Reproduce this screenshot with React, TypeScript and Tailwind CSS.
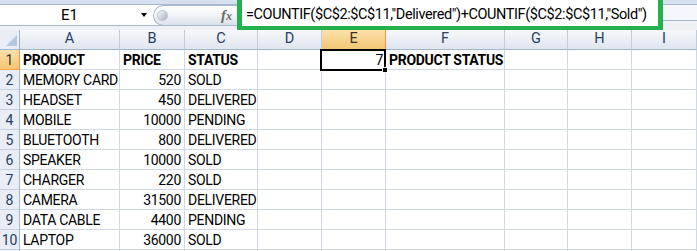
const GRID = "grid grid-cols-[20px_100px_65px_73px_64px_64px_119px_63px_64px_1fr]";

const COLS = ["A", "B", "C", "D", "E", "F", "G", "H", "I"];

const ROWS: [string, string, string][] = [
  ["MEMORY CARD", "520", "SOLD"],
  ["HEADSET", "450", "DELIVERED"],
  ["MOBILE", "10000", "PENDING"],
  ["BLUETOOTH", "800", "DELIVERED"],
  ["SPEAKER", "10000", "SOLD"],
  ["CHARGER", "220", "SOLD"],
  ["CAMERA", "31500", "DELIVERED"],
  ["DATA CABLE", "4400", "PENDING"],
  ["LAPTOP", "36000", "SOLD"],
];

function Cell({ children, right, bold }: { children?: React.ReactNode; right?: boolean; bold?: boolean }) {
  return (
    <div
      className={`h-[20px] border-r border-b border-[#d0d7e5] px-[3px] pt-[1px] leading-[19px] whitespace-nowrap ${
        right ? "text-right" : "text-left"
      } ${bold ? "font-bold" : ""}`}
    >
      {children}
    </div>
  );
}

function RowHead({ n, active }: { n?: number; active?: boolean }) {
  return (
    <div
      className={`h-[20px] border-b border-r flex items-center justify-center text-[14px] leading-none tracking-normal ${
        active
          ? "bg-linear-to-b from-[#fbe0ab] to-[#f3c774] border-b-[#f0a948] border-r-[#f29536] text-[#3d3422]"
          : "bg-[#e9eef6] border-b-[#c5d1df] border-r-[#9eb6ce] text-[#27405f]"
      }`}
    >
      {n}
    </div>
  );
}

export default function App() {
  return (
    <div className="w-full h-[251px] overflow-hidden bg-white font-['Roboto',sans-serif] text-[14px] tracking-[-0.3px] text-black">
      {/* formula bar */}
      <div className="flex h-[30px]">
        <div className="w-[237px] flex flex-col bg-[#eef1f5]">
          <div className="h-[4px] bg-[#d6e1ef]" />
          <div className="h-[22px] border-y border-[#a6b8cf] bg-white flex items-center">
            <div className="w-[139px] text-center text-[15px] tracking-normal leading-none pt-[1px]">E1</div>
            <div className="w-[9px] flex justify-center">
              <div className="w-0 h-0 border-x-[3px] border-t-[4px] border-x-transparent border-t-black" />
            </div>
            <div className="ml-[5px] flex-1 h-[21px] rounded-l-full border border-r-0 border-[#a9bad0] bg-linear-to-b from-white via-[#f1f4f8] to-[#d9e1eb] flex items-center">
              <div className="ml-[3px] w-[11px] h-[11px] rounded-full border border-[#b9c2cd] bg-linear-to-br from-[#fafbfc] to-[#a7b1bd]" />
              <div className="ml-auto mr-[5px] font-['Liberation_Serif',serif] italic font-bold text-[#6d6d6d] text-[15px] leading-none tracking-normal">
                f<span className="text-[12px]">x</span>
              </div>
            </div>
          </div>
        </div>
        <div className="w-[426px] h-[30px] border-x-[5px] border-b-[4px] border-[#22b14c] bg-white pl-[4px] pt-[5px] text-[14.5px] leading-[20px] tracking-[-0.4px] whitespace-nowrap overflow-hidden">
          =COUNTIF($C$2:$C$11,"Delivered")+COUNTIF($C$2:$C$11,"Sold")
        </div>
        <div className="flex-1 flex flex-col bg-[#eef1f5]">
          <div className="h-[4px] bg-[#d6e1ef]" />
          <div className="h-[17px] border-y border-[#a6b8cf] bg-[#f4f7fb]" />
        </div>
      </div>

      {/* column headers */}
      <div className={GRID}>
        <div className="h-[20px] bg-[#e9eef6] border-r border-b border-[#9eb6ce] flex items-end justify-end pr-[2px] pb-[3px]">
          <div className="w-0 h-0 border-b-[11px] border-l-[11px] border-b-[#b8c8dc] border-l-transparent" />
        </div>
        {COLS.map((c) => (
          <div
            key={c}
            className={`h-[20px] border-r border-b flex items-center justify-center text-[14.5px] leading-none tracking-normal ${
              c === "E"
                ? "bg-linear-to-b from-[#fbe0ab] to-[#f3c774] border-r-[#f29536] border-b-[#f29536] text-[#3d3422]"
                : "bg-linear-to-b from-[#f6f8fb] to-[#dfe6ef] border-r-[#c0cddd] border-b-[#9eb6ce] text-[#27405f]"
            }`}
          >
            {c}
          </div>
        ))}
      </div>

      {/* row 1 */}
      <div className={GRID}>
        <RowHead n={1} active />
        <Cell bold>PRODUCT</Cell>
        <Cell bold>PRICE</Cell>
        <Cell bold>STATUS</Cell>
        <Cell />
        <div className="relative h-[20px] border-r border-b border-[#d0d7e5]">
          <div className="absolute -left-[2px] -top-[1px] -right-[1px] -bottom-[2px] border-2 border-black text-right pr-[1px] leading-[19px]">
            7
          </div>
          <div className="absolute -right-[3px] -bottom-[4px] w-[6px] h-[6px] bg-black border border-white" />
        </div>
        <Cell bold>PRODUCT STATUS</Cell>
        <Cell />
        <Cell />
        <Cell />
      </div>

      {ROWS.map((r, i) => (
        <div key={i} className={GRID}>
          <RowHead n={i + 2} />
          <Cell>{r[0]}</Cell>
          <Cell right>{r[1]}</Cell>
          <Cell>{r[2]}</Cell>
          <Cell />
          <Cell />
          <Cell />
          <Cell />
          <Cell />
          <Cell />
        </div>
      ))}
      <div className={GRID}>
        <RowHead />
        {COLS.map((c) => (
          <Cell key={c} />
        ))}
      </div>
    </div>
  );
}
